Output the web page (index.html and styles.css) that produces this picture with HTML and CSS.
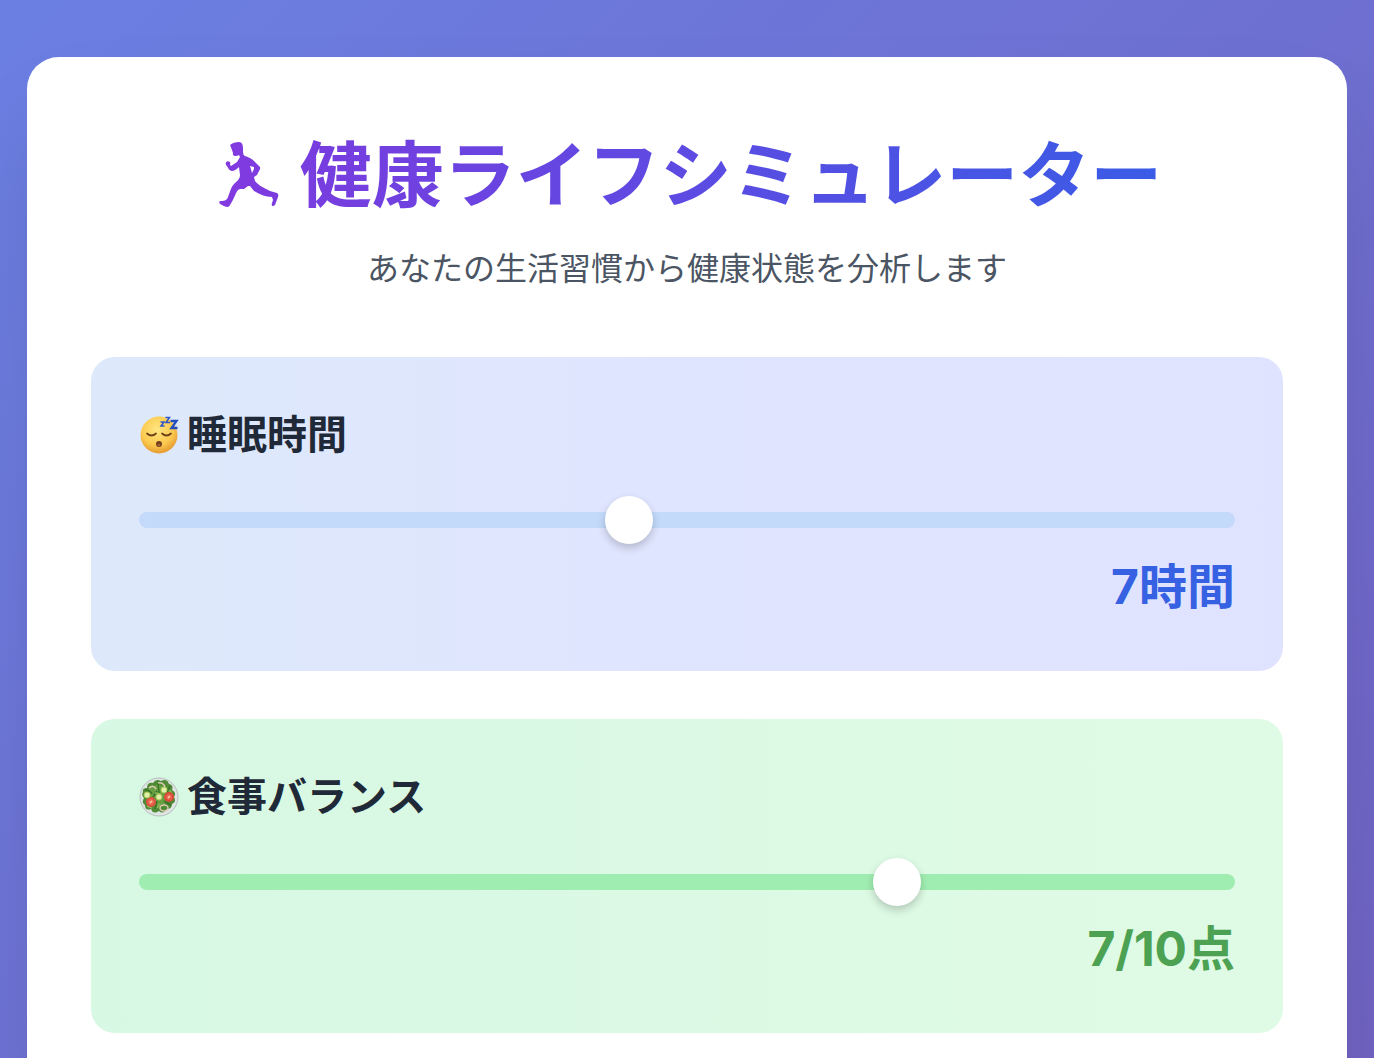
FILE: index.html
```
<!DOCTYPE html>
<html lang="ja">
<head>
    <meta charset="UTF-8">
    <meta name="viewport" content="width=device-width, initial-scale=1">
    <title>健康ライフシミュレーター</title>
    <link rel="stylesheet" href="styles.css">
</head>
<body>

<main class="container">
    <header class="header">
        <h1 class="title">
            <svg class="title-icon" viewBox="0 0 72 80" aria-hidden="true">
                <defs>
                    <linearGradient id="runner" x1="0" y1="0" x2="1" y2="0">
                        <stop offset="0" stop-color="#843ae0"/>
                        <stop offset="1" stop-color="#7a3cdf"/>
                    </linearGradient>
                </defs>
                <path fill="url(#runner)" fill-rule="evenodd" d="M18 10C20 8 24 7 27 7C30 7 31 10 31 13L31 17Q31 20 33 21C37 22 40 24 42 26L48 32C49 34 46 37 45 40L42 42L43 46C46 50 52 53 58 56L65 58Q67 59 66 62L63 70C61 72 59 71 60 68L61 65L60 62C54 62 47 59 42 56L38 51L36 51L32 54L28 54L26 55C24 57 22 64 18 70C17 73 13 72 10 70L8 69Q6 66 9 66C13 66 15 65 16 62C18 57 19 52 22 49C25 46 28 44 28 40L27 32C25 34 22 36 20 36C17 36 16 32 14 30C13 27 15 25 18 27C19 29 17 30 19 31L25 27L28 22L27 20C24 22 20 21 21 18L20 15ZM38 31L40 38L42 34L42 32Z"/>
            </svg>
            <span class="title-text">健康ライフシミュレーター</span>
        </h1>
        <p class="subtitle">あなたの生活習慣から健康状態を分析します</p>
    </header>

    <form class="habits">
        <section class="habit sleep">
            <label class="habit-label" for="sleep">
                <svg class="habit-icon" viewBox="0 0 40 40" aria-hidden="true">
                    <defs>
                        <radialGradient id="face" cx=".45" cy=".35" r=".65">
                            <stop offset="0" stop-color="#ffe680"/>
                            <stop offset=".65" stop-color="#fbca50"/>
                            <stop offset="1" stop-color="#e59a30"/>
                        </radialGradient>
                    </defs>
                    <circle cx="20" cy="20" r="18.5" fill="url(#face)"/>
                    <path d="M8 18.500q4.500 4 9 0M23 18.500q4.500 4 9 0" fill="none" stroke="#6d4218" stroke-width="1.700" stroke-linecap="round"/>
                    <circle cx="20" cy="29" r="3" fill="#70401d"/>
                    <circle cx="20" cy="30" r="1.300" fill="#a95d37"/>
                    <path d="M21.500 7h3.500l-3 4h3.500M26.500 2.500h4l-3.500 5h4" fill="none" stroke="#2c55c9" stroke-width="1.500"/>
                    <path d="M31.500 6h6l-5 7h6" fill="none" stroke="#2450bd" stroke-width="2.300"/>
                </svg>
                睡眠時間
            </label>
            <input class="slider" type="range" id="sleep" min="3" max="12" value="7">
            <output class="value" for="sleep">7時間</output>
        </section>

        <section class="habit meal">
            <label class="habit-label" for="meal">
                <svg class="habit-icon" viewBox="0 0 40 40" aria-hidden="true">
                    <circle cx="20" cy="20" r="19" fill="#dfe4e4" stroke="#b5c0bb"/>
                    <path d="M4 15Q3 11 8 11Q8 5 14 6Q17 1 22 4Q28 1 30 7Q35 8 33 13Q38 16 35 20Q38 25 33 27Q33 32 28 32Q24 38 20 34Q14 38 12 32Q6 34 6 28Q2 26 5 21Q2 18 4 15Z" fill="#4f8a34"/>
                    <path d="M9 15Q9 8 15 10Q18 5 22 9Q28 8 29 13Q33 15 30 18Q33 24 27 25Q25 31 20 28Q14 31 13 25Q7 25 10 21Q7 18 9 15Z" fill="#699f43"/>
                    <path d="M6 13q5 0 7 4M19 6l1 10M31 9l-4 8M18 24l-2 8M32 28l-7-4M14 20l4-6" fill="none" stroke="#387326" stroke-width="1.500"/>
                    <path d="M8 29l5 2M18 31l3-4M31 13l2 5M16 16l6 1" stroke="#8eb957" stroke-width="1.500"/>
                    <circle cx="12" cy="25" r="5" fill="#dc5140"/>
                    <circle cx="30" cy="20" r="5" fill="#d94b3b"/>
                    <circle cx="12" cy="25" r="3" fill="#ec6c53"/>
                    <circle cx="30" cy="20" r="3" fill="#e8634d"/>
                    <path d="M11 26l2-2M29 21l2-2" stroke="#ffd2a7" stroke-width="1.500"/>
                    <g fill="#e2efaa" stroke="#a6ca58">
                        <circle cx="8" cy="18" r="3"/>
                        <circle cx="20" cy="20" r="3"/>
                        <circle cx="25" cy="13" r="3"/>
                    </g>
                    <path d="M10 11q4-4 7 1M19 6q5-1 7 4" fill="none" stroke="#dac9b4" stroke-width="1.500"/>
                    <ellipse cx="25" cy="31" rx="4" ry="3" fill="none" stroke="#dac9b4" stroke-width="1.500"/>
                </svg>
                食事バランス
            </label>
            <input class="slider" type="range" id="meal" min="0" max="10" value="7">
            <output class="value" for="meal">7/10点</output>
        </section>
    </form>
</main>

</body>
</html>
```

FILE: styles.css
```
* {
    box-sizing: border-box;
}

body {
    height: 100vh;
    margin: 0;
    padding: 57px 27px 0;
    overflow: hidden;
    font-family: Inter, "Noto Sans CJK JP", sans-serif;
    background: linear-gradient(135deg, #6b7fe2 0%, #744fac 170%);
}

.container {
    min-height: 100vh;
    padding: 64px;
    border-radius: 32px;
    background-color: white;
    box-shadow: 0 50px 100px -24px rgba(0, 0, 0, 0.15);
}

.header {
    margin-bottom: 64px;
    text-align: center;
}

.title {
    display: flex;
    align-items: center;
    justify-content: center;
    gap: 16px;
    margin: 0 0 16px;
    font-size: 72px;
    line-height: 108px;
}

.title-icon {
    width: 72px;
    height: 80px;
}

.title-text {
    color: transparent;
    background: linear-gradient(to right, #783ddf, #3a5ce6);
    -webkit-background-clip: text;
    background-clip: text;
}

.subtitle {
    margin: 0;
    color: #4b5563;
    font-size: 32px;
    line-height: 48px;
}

.habits {
    display: grid;
    gap: 48px;
}

.habit {
    display: flex;
    flex-direction: column;
    padding: 48px;
    border-radius: 24px;
}

.sleep {
    background: linear-gradient(to right, #dde9fb, #e0e5ff 50%, #e0e3ff);
}

.meal {
    background: linear-gradient(to right, #d7f8e3, #e0fbe5);
}

.habit-label {
    display: flex;
    align-items: center;
    gap: 8px;
    margin-bottom: 32px;
    color: #1f2937;
    font-size: 40px;
    font-weight: bold;
    line-height: 60px;
}

.habit-icon {
    width: 40px;
    height: 40px;
}

.slider {
    -webkit-appearance: none;
    appearance: none;
    width: 100%;
    height: 46px;
    margin: 0 0 8px;
    background: transparent;
    cursor: pointer;
}

.slider::-webkit-slider-runnable-track {
    height: 16px;
    border-radius: 8px;
}

.sleep .slider::-webkit-slider-runnable-track {
    background-color: #c3dafb;
}

.meal .slider::-webkit-slider-runnable-track {
    background-color: #a0edb2;
}

.slider::-webkit-slider-thumb {
    -webkit-appearance: none;
    width: 48px;
    height: 48px;
    margin-top: -16px;
    border-radius: 50%;
    background-color: white;
    box-shadow: 0 4px 8px rgba(0, 0, 0, 0.2);
}

.value {
    font-size: 48px;
    font-weight: bold;
    line-height: 72px;
    text-align: right;
}

.sleep .value {
    color: #3661e2;
}

.meal .value {
    color: #4ca153;
}
```
